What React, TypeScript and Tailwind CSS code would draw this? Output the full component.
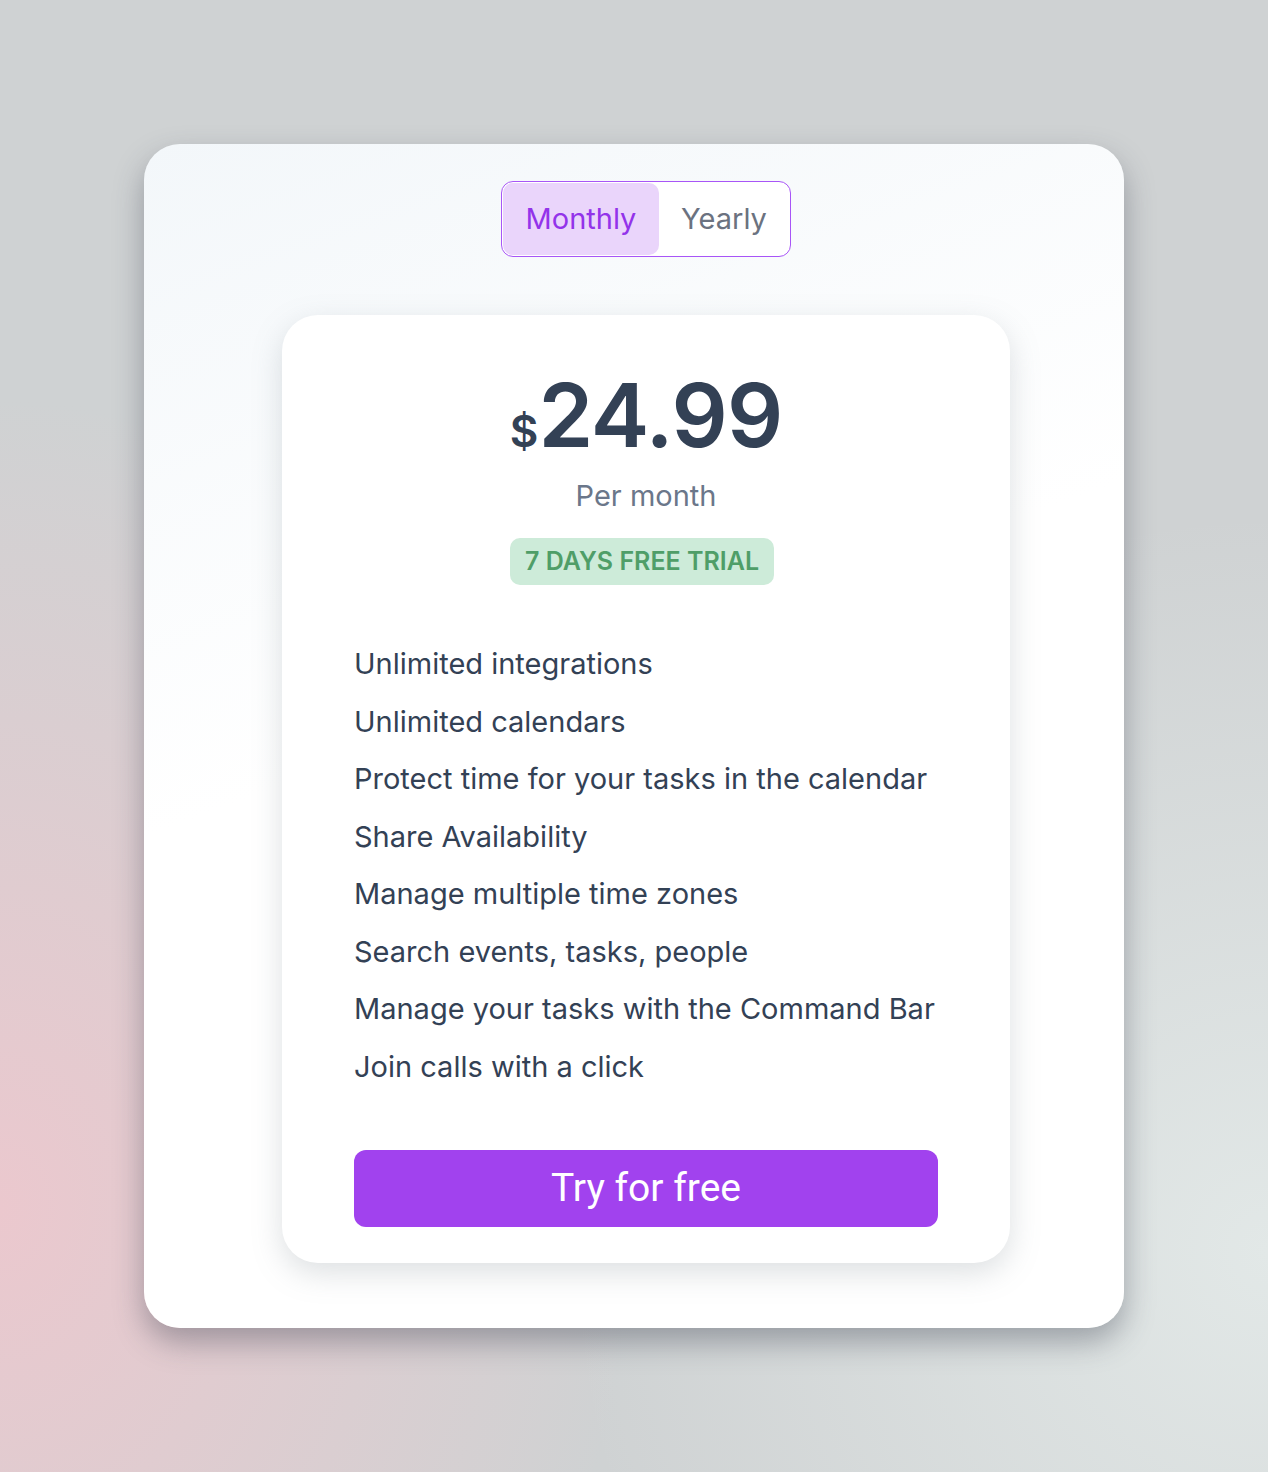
import React, { useState } from 'react';

const features = [
  'Unlimited integrations',
  'Unlimited calendars',
  'Protect time for your tasks in the calendar',
  'Share Availability',
  'Manage multiple time zones',
  'Search events, tasks, people',
  'Manage your tasks with the Command Bar',
  'Join calls with a click',
];

const App: React.FC = () => {
  const [billing, setBilling] = useState<'monthly' | 'yearly'>('monthly');

  return (
    <div className="relative min-h-[1472px] w-full overflow-hidden bg-[#cfd2d3] pt-[144px] font-['Inter',sans-serif]">
      {/* background tint */}
      <div className="pointer-events-none absolute inset-0 bg-[radial-gradient(ellipse_50%_55%_at_0%_82%,#ebc8ce_0%,rgba(235,200,206,0)_100%)]" />
      <div className="pointer-events-none absolute inset-0 bg-[radial-gradient(ellipse_55%_50%_at_100%_85%,#e2e8e7_0%,rgba(226,232,231,0)_100%)]" />

      <div className="relative mx-auto flex w-[980px] flex-col items-center rounded-[36px] bg-[linear-gradient(160deg,#f3f7fa_0%,#ffffff_45%,#ffffff_100%)] pb-[65px] pl-[24px] pt-[37px] shadow-[0_14px_30px_rgba(60,65,80,0.4)]">
        {/* billing toggle */}
        <div className="flex h-[76px] w-[290px] items-stretch rounded-[12px] border border-[#a855f7] bg-white p-[1px]">
          <button
            onClick={() => setBilling('monthly')}
            className={`w-[156px] rounded-[10px] text-[29px] ${
              billing === 'monthly' ? 'bg-[#ead5fb] text-[#9333ea]' : 'text-[#6b7280]'
            }`}
          >
            Monthly
          </button>
          <button
            onClick={() => setBilling('yearly')}
            className={`flex-1 rounded-[10px] text-[29px] ${
              billing === 'yearly' ? 'bg-[#ead5fb] text-[#9333ea]' : 'text-[#6b7280]'
            }`}
          >
            Yearly
          </button>
        </div>

        {/* plan card */}
        <div className="mt-[58px] flex w-[728px] flex-col items-center rounded-[36px] bg-white px-[72px] pb-[36px] pt-[56px] shadow-[0_10px_30px_rgba(120,130,140,0.25)]">
          <div className="flex items-baseline text-[#334155]">
            <span className="text-[44px] font-semibold leading-none">$</span>
            <span className="text-[88px] font-semibold leading-none tracking-[-1px]">
              {billing === 'monthly' ? '24.99' : '19.99'}
            </span>
          </div>
          <div className="mt-[22px] text-[29px] leading-none text-[#6b778a]">
            {billing === 'monthly' ? 'Per month' : 'Per month, billed yearly'}
          </div>
          <div className="mr-[8px] mt-[28px] flex h-[47px] items-center rounded-[10px] bg-[#cdebd9] px-[15px] text-[25px] font-semibold text-[#4f9e68]">
            7 DAYS FREE TRIAL
          </div>

          <ul className="mt-[58px] flex w-full flex-col gap-[15.5px]">
            {features.map((f) => (
              <li key={f} className="text-[29px] leading-[42px] text-[#334155]">
                {f}
              </li>
            ))}
          </ul>

          <button className="mt-[62px] flex h-[77px] w-full items-center justify-center rounded-[12px] bg-[#a142ee] font-['Roboto',sans-serif] text-[39px] text-white">
            Try for free
          </button>
        </div>
      </div>
    </div>
  );
};

export default App;
